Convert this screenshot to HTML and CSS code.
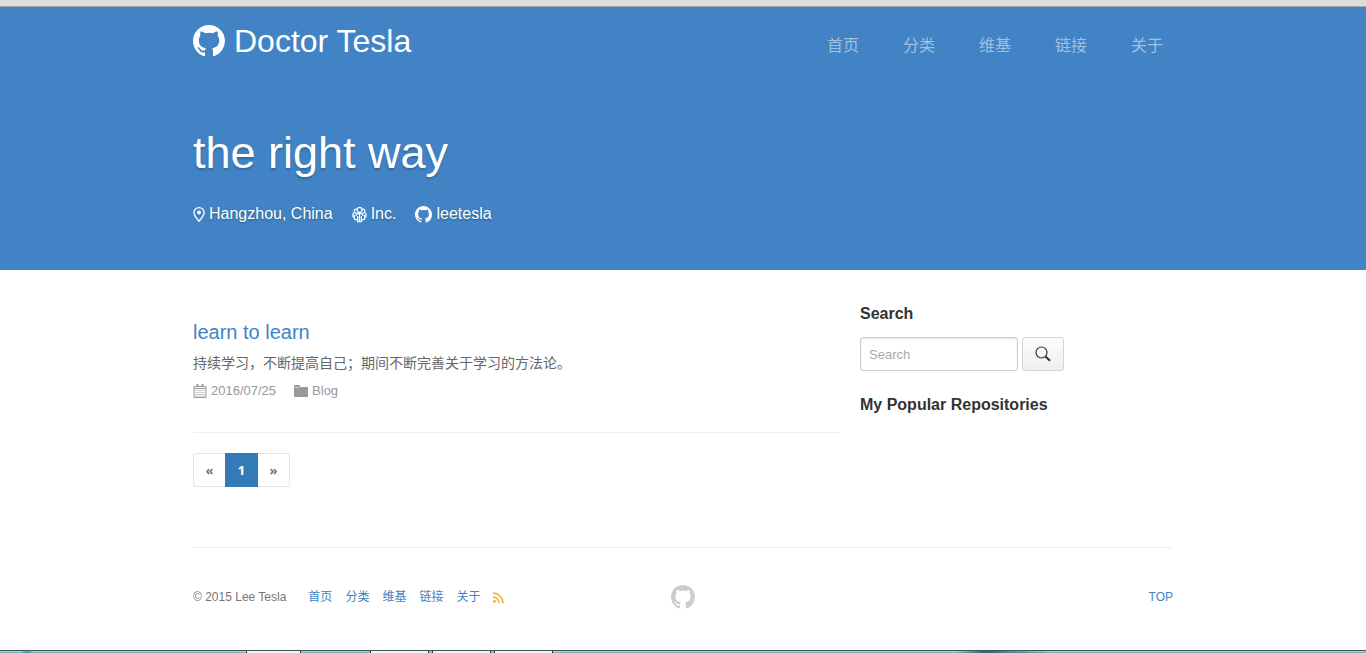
FILE: index.html
```html
<!DOCTYPE html>
<html lang="zh-CN">
<head>
<meta charset="utf-8">
<title>Doctor Tesla</title>
<link rel="stylesheet" href="styles.css">
</head>
<body>
<svg class="sprite" aria-hidden="true">
  <symbol id="mark" viewBox="0 0 16 16"><path d="M8 0C3.58 0 0 3.58 0 8c0 3.54 2.29 6.53 5.47 7.59.4.07.55-.17.55-.38 0-.19-.01-.82-.01-1.49-2.01.37-2.53-.49-2.69-.94-.09-.23-.48-.94-.82-1.13-.28-.15-.68-.52-.01-.53.63-.01 1.08.58 1.23.82.72 1.21 1.87.87 2.33.66.07-.52.28-.87.51-1.07-1.78-.2-3.64-.89-3.64-3.95 0-.87.31-1.59.82-2.15-.08-.2-.36-1.02.08-2.12 0 0 .67-.21 2.2.82.64-.18 1.32-.27 2-.27.68 0 1.36.09 2 .27 1.53-1.04 2.2-.82 2.2-.82.44 1.1.16 1.92.08 2.12.51.56.82 1.27.82 2.15 0 3.07-1.87 3.75-3.65 3.95.29.25.54.73.54 1.48 0 1.07-.01 1.93-.01 2.2 0 .21.15.46.55.38A8.013 8.013 0 0 0 16 8c0-4.42-3.58-8-8-8z"/></symbol>
</svg>
<div class="window-top"></div>
<header class="banner">
  <div class="container">
    <div class="topbar">
      <a class="brand" href="#"><svg class="brand-icon" aria-hidden="true"><use href="#mark"/></svg>Doctor Tesla</a>
      <nav class="nav">
        <a href="#">首页</a><a href="#">分类</a><a href="#">维基</a><a href="#">链接</a><a href="#">关于</a>
      </nav>
    </div>
    <h1 class="tagline">the right way</h1>
    <div class="facts">
      <span class="fact"><svg class="icon-pin" viewBox="0 0 13 17" aria-hidden="true"><path d="M6.500 1A5.500 5.500 0 0 0 1 6.500C1 9.800 4.500 13 6.500 15.800 8.500 13 12 9.800 12 6.500A5.500 5.500 0 0 0 6.500 1z" fill="none" stroke="currentColor" stroke-width="1.400"/><circle cx="6.500" cy="6.300" r="2.100"/></svg>Hangzhou, China</span>
      <span class="fact"><svg class="icon-org" viewBox="0 0 16 17" aria-hidden="true"><g fill="none" stroke="currentColor" stroke-width="1.300"><circle cx="8" cy="3.600" r="2.700"/><path d="M5 2.800C3 2.300 2 3.800 2.600 5.800M11 2.800c2-.5 3 1 2.400 3M4.500 6.800H2.500Q1 6.800 1 8.300v2q0 1 1.500 1M11.500 6.800h2Q15 6.800 15 8.300v2q0 1-1.500 1M2.500 9v4q0 1 1.500 1h1.500M13.500 9v4q0 1-1.500 1h-1.500M4.500 10V8.500Q4.500 7.500 6 7.500h4q1.500 0 1.500 1V10M6 10v6h4v-6M8 8v8"/></g></svg>Inc.</span>
      <a class="fact" href="#"><svg class="icon-user" aria-hidden="true"><use href="#mark"/></svg>leetesla</a>
    </div>
  </div>
</header>
<main class="container content">
  <div class="posts">
    <article class="post">
      <h2 class="post-title"><a href="#">learn to learn</a></h2>
      <p class="post-text">持续学习，不断提高自己；期间不断完善关于学习的方法论。</p>
      <div class="meta">
        <span class="meta-item"><svg class="icon-date" viewBox="0 0 13 14" aria-hidden="true"><path d="M.5 2.500h12v11H.5zM.5 4.500h12" fill="none" stroke="currentColor"/><path d="M3 0h2v3H3zM8 0h2v3H8z"/><path d="M2 6.500h9M2 8.500h9M2 10.500h9M2 12h9" fill="none" stroke="currentColor" stroke-dasharray="1 1"/></svg>2016/07/25</span>
        <a class="meta-item" href="#"><svg class="icon-folder" viewBox="0 0 14 12" aria-hidden="true"><path d="M0 1q0-1 1-1h4q1 0 1 1v1h7q1 0 1 1v8q0 1-1 1H1q-1 0-1-1z"/><path d="M1 2.500h4" stroke="#fff" stroke-width=".6"/></svg>Blog</a>
      </div>
    </article>
    <nav class="pages" aria-label="Pages">
      <a href="#">«</a><a class="current" href="#" aria-current="page">1</a><a href="#">»</a>
    </nav>
  </div>
  <aside class="side">
    <h3><label for="q">Search</label></h3>
    <form class="search">
      <input id="q" type="text" placeholder="Search">
      <button type="submit" aria-label="Search"><svg viewBox="0 0 16 16" aria-hidden="true"><circle cx="6.500" cy="6.500" r="5.500" fill="none" stroke="#333" stroke-width="1.200"/><path d="M10.500 10.500 15 14.800" stroke="#333" stroke-width="2"/></svg></button>
    </form>
    <h3>My Popular Repositories</h3>
  </aside>
</main>
<footer class="container footer">
  <div class="foot-left">
    <span>© 2015 Lee Tesla</span>
    <nav class="foot-nav">
      <a href="#">首页</a><a href="#">分类</a><a href="#">维基</a><a href="#">链接</a><a href="#">关于</a>
      <a class="feed" href="#" aria-label="RSS"><svg viewBox="0 0 11 11" aria-hidden="true"><circle cx="1.500" cy="9.500" r="1.400"/><path d="M0 5a6 6 0 0 1 6 6M0 1a10 10 0 0 1 10 10" fill="none" stroke="currentColor" stroke-width="1.500"/></svg></a>
    </nav>
  </div>
  <a class="foot-mark" href="#" aria-label="GitHub"><svg aria-hidden="true"><use href="#mark"/></svg></a>
  <a class="top-link" href="#">TOP</a>
</footer>
<div class="taskbar"><i class="tab tab-first"></i><i class="tab"></i><i class="tab"></i><i class="tab"></i></div>
</body>
</html>
```
FILE: styles.css
```css
* { box-sizing: border-box; }
body {
  margin: 0;
  min-height: 100vh;
  display: flex;
  flex-direction: column;
  background: #fff;
  color: #333;
  font: 14px/20px "Liberation Sans", "Noto Sans CJK SC", sans-serif;
}
a { color: #4183c4; text-decoration: none; }
h1, h2, h3, p { margin: 0; }
svg { fill: currentColor; flex: none; }
.sprite { display: none; }
.container { width: 100%; max-width: 980px; margin: 0 auto; }

.window-top { height: 7px; background: #dedede; border-bottom: 1px solid #a5a5a5; }
.banner { background: #4183c4; color: #fff; padding: 14px 0 46px; }
.topbar { display: flex; justify-content: space-between; align-items: center; }
.brand { display: flex; align-items: center; gap: 9px; color: #fff; font-size: 32px; line-height: 40px; }
.brand-icon { width: 32px; height: 32px; }
.nav { display: flex; gap: 44px; padding: 10px 10px 0 0; font-size: 16px; line-height: 24px; }
.nav a { color: #a0c1e1; }
.tagline { margin-top: 64px; font-size: 45px; font-weight: 400; line-height: 56px; text-shadow: 0 2px 2px rgba(0, 0, 0, .2); }
.facts { display: flex; gap: 19px; margin-top: 23px; font-size: 16px; line-height: 20px; text-shadow: 0 1px 2px rgba(0, 0, 0, .3); }
.fact { display: flex; align-items: center; gap: 4px; color: #fff; }
.icon-pin { width: 12px; height: 17px; }
.icon-org { width: 15px; height: 17px; }
.icon-user { width: 17px; height: 17px; }

.content { display: grid; grid-template-columns: 647px 1fr; gap: 20px; }
.post { padding: 50px 0 31px; border-bottom: 1px solid #eee; }
.post-title { font-size: 20px; font-weight: 400; line-height: 24px; }
.post-text { margin-top: 7px; color: #666; line-height: 24px; }
.meta { display: flex; gap: 18px; margin-top: 6px; font-size: 13px; line-height: 20px; }
.meta-item { display: flex; align-items: center; gap: 4px; color: #999; }
.icon-date { width: 14px; height: 14px; }
.icon-folder { width: 14px; height: 12px; }
.pages { display: inline-flex; margin-top: 20px; font: bold 13px/32px "Open Sans", sans-serif; }
.pages a { width: 32px; height: 34px; text-align: center; border: 1px solid #e5e5e5; color: #767676; }
.pages a:first-child { border-right: 0; border-radius: 3px 0 0 3px; }
.pages a:last-child { border-left: 0; border-radius: 0 3px 3px 0; }
.pages .current { width: 33px; background: #337ab7; border-color: #337ab7; color: #fff; }

.side { padding-top: 32px; }
.side h3 { font-size: 16px; line-height: 24px; }
.search { display: flex; gap: 4px; margin: 11px 0 22px; }
.search input {
  width: 158px;
  height: 34px;
  padding: 0 8px;
  border: 1px solid #ccc;
  border-radius: 3px;
  box-shadow: inset 0 1px 2px rgba(0, 0, 0, .1);
  font: 13px "Liberation Sans", sans-serif;
}
.search input::placeholder { color: #aaa; }
.search button {
  display: flex;
  align-items: center;
  justify-content: center;
  width: 42px;
  height: 34px;
  padding: 0;
  border: 1px solid #d5d5d5;
  border-radius: 3px;
  background: linear-gradient(#fcfcfc, #eee);
}
.search svg { width: 16px; height: 16px; }

.footer {
  display: grid;
  grid-template-columns: 1fr auto 1fr;
  align-items: center;
  margin-top: 60px;
  padding: 37px 0 39px;
  border-top: 1px solid #eee;
  color: #767676;
  font-size: 12px;
}
.foot-left, .foot-nav { display: flex; align-items: center; }
.foot-left { gap: 22px; }
.foot-nav { gap: 13px; }
.feed { color: #faaf2c; }
.feed svg { display: block; width: 11px; height: 11px; }
.foot-mark { color: #ccc; }
.foot-mark svg { display: block; width: 24px; height: 24px; }
.top-link { justify-self: end; }

.taskbar {
  display: flex;
  gap: 3px;
  height: 3px;
  margin-top: auto;
  padding-left: 18%;
  border-top: 1px solid #40505b;
  background:
    radial-gradient(ellipse at center, #1769a5, transparent 70%) 20px 0 / 14px 2px no-repeat,
    linear-gradient(90deg, transparent 70%, #35656b 72%, transparent 77%),
    linear-gradient(#b6d0d4 50%, #80adaf 50%);
}
.tab { width: 59px; height: 2px; background: #f2f6f6; border: solid #263238; border-width: 0 1px; }
.tab:first-child { width: 55px; }
.tab-first { margin-right: 66px; }
```
